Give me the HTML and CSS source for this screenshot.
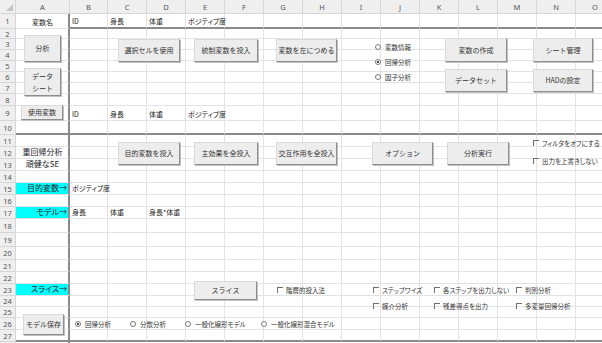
FILE: index.html
```html
<!DOCTYPE html>
<html lang="ja">
<head>
    <meta charset="UTF-8">
    <title>HAD</title>
    <link rel="stylesheet" href="styles.css">
</head>
<body>

<div class="sheet" id="sheet">
    <!-- top panel -->
    <button class="btn b-run">分析</button>
    <button class="btn b-datasheet">データ<br>シート</button>
    <button class="btn b-usevar">使用変数</button>
    <button class="btn b-selcell">選択セルを使用</button>
    <button class="btn b-control">統制変数を投入</button>
    <button class="btn b-left">変数を左につめる</button>
    <button class="btn b-make">変数の作成</button>
    <button class="btn b-sheetmgr">シート管理</button>
    <button class="btn b-dataset">データセット</button>
    <button class="btn b-had">HADの設定</button>

    <label class="opt o-info"><span class="radio"></span>変数情報</label>
    <label class="opt o-reg"><span class="radio on"></span>回帰分析</label>
    <label class="opt o-factor"><span class="radio"></span>因子分析</label>

    <!-- model panel -->
    <button class="btn b-target">目的変数を投入</button>
    <button class="btn b-main">主効果を全投入</button>
    <button class="btn b-inter">交互作用を全投入</button>
    <button class="btn b-option">オプション</button>
    <button class="btn b-exec">分析実行</button>

    <label class="opt c-filter"><span class="check"></span>フィルタをオフにする</label>
    <label class="opt c-noover"><span class="check"></span>出力を上書きしない</label>

    <button class="btn b-slice">スライス</button>
    <label class="opt c-hier"><span class="check"></span>階層的投入法</label>
    <label class="opt c-step"><span class="check"></span>ステップワイズ</label>
    <label class="opt c-med"><span class="check"></span>媒介分析</label>
    <label class="opt c-nostep"><span class="check"></span>各ステップを出力しない</label>
    <label class="opt c-resid"><span class="check"></span>残差得点を出力</label>
    <label class="opt c-disc"><span class="check"></span>判別分析</label>
    <label class="opt c-multi"><span class="check"></span>多変量回帰分析</label>

    <button class="btn b-save">モデル保存</button>
    <label class="opt m-reg"><span class="radio on"></span>回帰分析</label>
    <label class="opt m-anova"><span class="radio"></span>分散分析</label>
    <label class="opt m-glm"><span class="radio"></span>一般化線形モデル</label>
    <label class="opt m-glmm"><span class="radio"></span>一般化線形混合モデル</label>
</div>

<script>
    const cols = 'ABCDEFGHIJKLMNO';
    const data = {
        A1: ['変数名', 'center'], B1: ['ID'], C1: ['身長'], D1: ['体重'], E1: ['ポジティブ度'],
        B9: ['ID'], C9: ['身長'], D9: ['体重'], E9: ['ポジティブ度'],
        A12: ['重回帰分析', 'center big'], A13: ['頑健なSE', 'center big'],
        A15: ['目的変数→', 'label big'], B15: ['ポジティブ度'],
        A17: ['モデル→', 'label big'], B17: ['身長'], C17: ['体重'], D17: ['身長*体重'],
        A23: ['スライス→', 'label big']
    };

    const sheet = document.getElementById('sheet');
    const first = sheet.firstElementChild;

    for (let r = 0; r <= 28; r++) {
        for (let c = 0; c <= 15; c++) {
            const cell = document.createElement('div');
            if (r === 0 && c === 0) {
                cell.className = 'corner';
            } else if (r === 0) {
                cell.className = 'col-head';
                cell.textContent = cols[c - 1];
            } else if (c === 0) {
                cell.className = 'row-head';
                if (r < 28) cell.textContent = r; // last row is only a sliver
            } else {
                cell.className = 'cell';
                const item = data[cols[c - 1] + r];
                if (item) {
                    cell.textContent = item[0];
                    if (item[1]) cell.className += ' ' + item[1];
                }
                if (c === 1) cell.classList.add('edge-right');
                if ((r === 1 && c > 1) || r === 10 || r === 27) cell.classList.add('edge-bottom');
            }
            sheet.insertBefore(cell, first);
        }
    }
</script>

</body>
</html>
```

FILE: styles.css
```css
body {
    margin: 0;
    background: #ffffff;
    font-family: "Noto Sans CJK JP", "Noto Sans", sans-serif;
    font-feature-settings: "palt";
    overflow: hidden;
}

.sheet {
    position: relative;
    display: grid;
    grid-template-columns: 16px 54px 38px repeat(13, 39px);
    grid-template-rows: 14px 15px 10px repeat(5, 11px) 12px 15px 14px repeat(7, 12px) 14px 14px 13px 12px 12px 12px 11px 11px 12px 12px 12px;
    width: 602px;
    height: 343px;
    overflow: hidden;
}

/* grid cells */

.corner,
.col-head,
.row-head,
.cell {
    box-sizing: border-box;
    border-right: 1px solid #e3e3e3;
    border-bottom: 1px solid #e3e3e3;
    white-space: nowrap;
}

.corner {
    position: relative;
    background: #efefef;
    border-color: #d6d6d6;
}

.corner::after {
    content: "";
    position: absolute;
    right: 2px;
    bottom: 2px;
    border-left: 7px solid transparent;
    border-bottom: 7px solid #c4c4c4;
}

.col-head,
.row-head {
    overflow: hidden;
    background: #efefef;
    border-color: #d6d6d6;
    color: #555555;
    font-family: "Noto Sans", sans-serif;
    font-size: 7.5px;
    display: flex;
    align-items: center;
    justify-content: center;
}

.cell {
    display: flex;
    align-items: flex-end;
    padding: 0 1px 1px 2px;
    font-size: 7px;
    line-height: 10px;
    color: #222222;
}

.cell.big {
    font-size: 8px;
}

.cell.center {
    justify-content: center;
}

.cell.label {
    justify-content: flex-end;
    background: #00ffff;
}

.cell.edge-right {
    border-right: 2px solid #8a8a8a;
}

.cell.edge-bottom {
    border-bottom: 2px solid #8a8a8a;
}

/* form controls floating over the sheet */

.btn {
    position: absolute;
    box-sizing: border-box;
    padding: 0;
    background: #ededed;
    border: 1px solid;
    border-color: #dadada #8e8e8e #8e8e8e #dadada;
    box-shadow: 1px 1px 0 #c2c2c2;
    font-family: inherit;
    font-size: 7px;
    line-height: 11px;
    color: #333333;
    text-align: center;
}

.b-run       { left: 24px;  top: 35px;  width: 37px; height: 27px; }
.b-datasheet { left: 24px;  top: 68px;  width: 37px; height: 28px; line-height: 12px; }
.b-usevar    { left: 21px;  top: 105px; width: 42px; height: 15px; }
.b-selcell   { left: 118px; top: 39px;  width: 62px; height: 23px; }
.b-control   { left: 194px; top: 39px;  width: 64px; height: 23px; }
.b-left      { left: 276px; top: 39px;  width: 61px; height: 23px; }
.b-make      { left: 445px; top: 38px;  width: 62px; height: 24px; }
.b-sheetmgr  { left: 533px; top: 38px;  width: 60px; height: 24px; }
.b-dataset   { left: 445px; top: 69px;  width: 62px; height: 23px; }
.b-had       { left: 533px; top: 69px;  width: 60px; height: 23px; }
.b-target    { left: 118px; top: 142px; width: 62px; height: 23px; }
.b-main      { left: 194px; top: 142px; width: 64px; height: 23px; }
.b-inter     { left: 276px; top: 142px; width: 61px; height: 23px; }
.b-option    { left: 372px; top: 142px; width: 61px; height: 23px; }
.b-exec      { left: 447px; top: 142px; width: 62px; height: 23px; }
.b-slice     { left: 194px; top: 281px; width: 63px; height: 19px; }
.b-save      { left: 23px;  top: 314px; width: 41px; height: 21px; }

.opt {
    position: absolute;
    display: flex;
    align-items: center;
    gap: 3px;
    height: 8px;
    font-size: 6.5px;
    line-height: 8px;
    color: #333333;
    white-space: nowrap;
}

.radio {
    position: relative;
    box-sizing: border-box;
    width: 6px;
    height: 6px;
    margin-right: 1px;
    border: 1px solid #7a7a7a;
    border-radius: 50%;
    background: #ffffff;
}

.radio.on::after {
    content: "";
    position: absolute;
    left: 1px;
    top: 1px;
    width: 2px;
    height: 2px;
    border-radius: 50%;
    background: #111111;
}

.check {
    box-sizing: border-box;
    width: 6px;
    height: 6px;
    border-top: 1px solid #6e6e6e;
    border-left: 1px solid #6e6e6e;
}

.o-info   { left: 375px; top: 43px; }
.o-reg    { left: 375px; top: 58px; }
.o-factor { left: 375px; top: 73px; }

.c-filter { left: 533px; top: 139px; }
.c-noover { left: 533px; top: 157px; }
.c-hier   { left: 277px; top: 286px; }
.c-step   { left: 373px; top: 286px; }
.c-med    { left: 373px; top: 302px; }
.c-nostep { left: 434px; top: 286px; }
.c-resid  { left: 434px; top: 302px; }
.c-disc   { left: 516px; top: 286px; }
.c-multi  { left: 516px; top: 302px; }

.m-reg    { left: 75px;  top: 320px; }
.m-anova  { left: 130px; top: 320px; }
.m-glm    { left: 185px; top: 320px; }
.m-glmm   { left: 261px; top: 320px; }
```
